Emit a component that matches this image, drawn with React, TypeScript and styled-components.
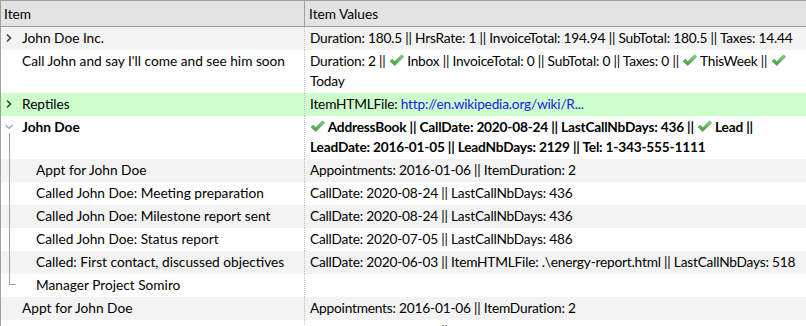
import React from "react";
import styled, { createGlobalStyle } from "styled-components";

const GlobalStyle = createGlobalStyle`
  html, body {
    margin: 0;
    padding: 0;
    background: #ffffff;
  }
  body {
    font-family: Lato, "Noto Sans", sans-serif;
    font-size: 13.7px;
    color: #000;
  }
`;

type Seg = string | { check: true } | { link: string };

type Row = {
  label: string;
  level: number;
  expander?: "closed" | "open";
  bold?: boolean;
  green?: boolean;
  guide?: "mid" | "last" | "start";
  values: Seg[];
};

const CHECK = { check: true } as const;

const rows: Row[] = [
  {
    label: "John Doe Inc.",
    level: 0,
    expander: "closed",
    values: ["Duration: 180.5 || HrsRate: 1 || InvoiceTotal: 194.94 || SubTotal: 180.5 || Taxes: 14.44"],
  },
  {
    label: "Call John and say I'll come and see him soon",
    level: 0,
    values: ["Duration: 2 || ", CHECK, " Inbox || InvoiceTotal: 0 || SubTotal: 0 || Taxes: 0 || ", CHECK, " ThisWeek || ", CHECK, " Today"],
  },
  {
    label: "Reptiles",
    level: 0,
    expander: "closed",
    green: true,
    values: ["ItemHTMLFile: ", { link: "http://en.wikipedia.org/wiki/R..." }],
  },
  {
    label: "John Doe",
    level: 0,
    expander: "open",
    bold: true,
    guide: "start",
    values: [CHECK, " AddressBook || CallDate: 2020-08-24 || LastCallNbDays: 436 || ", CHECK, " Lead || LeadDate: 2016-01-05 || LeadNbDays: 2129 || Tel: 1-343-555-1111"],
  },
  { label: "Appt for John Doe", level: 1, guide: "mid", values: ["Appointments: 2016-01-06 || ItemDuration: 2"] },
  { label: "Called John Doe: Meeting preparation", level: 1, guide: "mid", values: ["CallDate: 2020-08-24 || LastCallNbDays: 436"] },
  { label: "Called John Doe: Milestone report sent", level: 1, guide: "mid", values: ["CallDate: 2020-08-24 || LastCallNbDays: 436"] },
  { label: "Called John Doe: Status report", level: 1, guide: "mid", values: ["CallDate: 2020-07-05 || LastCallNbDays: 486"] },
  {
    label: "Called: First contact, discussed objectives",
    level: 1,
    guide: "mid",
    values: ["CallDate: 2020-06-03 || ItemHTMLFile: .\\energy-report.html || LastCallNbDays: 518"],
  },
  { label: "Manager Project Somiro", level: 1, guide: "last", values: [] },
  { label: "Appt for John Doe", level: 0, values: ["Appointments: 2016-01-06 || ItemDuration: 2"] },
  { label: "Called John Doe: Meeting preparation", level: 0, values: ["CallDate: 2020-08-24 || LastCallNbDays: 436"] },
];

function Check() {
  return (
    <CheckIcon width="15" height="13" viewBox="0 0 15 13">
      <defs>
        <linearGradient id="ck" x1="0" y1="0" x2="0" y2="1">
          <stop offset="0" stopColor="#8fd08a" />
          <stop offset="1" stopColor="#3e9a3a" />
        </linearGradient>
      </defs>
      <path
        d="M1 7.2 L3.2 5 L5.8 7.6 L12.6 0.8 L14.6 2.8 L5.8 11.6 Z"
        fill="url(#ck)"
        stroke="#4a9a46"
        strokeWidth="0.6"
        strokeLinejoin="round"
      />
    </CheckIcon>
  );
}

function Chevron({ open }: { open: boolean }) {
  return open ? (
    <ChevronSvg width="10" height="10" viewBox="0 0 10 10">
      <path d="M1.5 3 L5 6.5 L8.5 3" fill="none" stroke="#a0a0a0" strokeWidth="1.2" />
    </ChevronSvg>
  ) : (
    <ChevronSvg width="10" height="10" viewBox="0 0 10 10">
      <path d="M3 1.5 L6.5 5 L3 8.5" fill="none" stroke="#404040" strokeWidth="1.6" />
    </ChevronSvg>
  );
}

export default function App() {
  return (
    <>
      <GlobalStyle />
      <Grid>
        <Header>
          <HeadCell>Item</HeadCell>
          <HeadCell $divider>Item Values</HeadCell>
        </Header>
        {rows.map((r, i) => (
          <RowLine key={i} $bg={r.green ? "#ccffcc" : i % 2 === 0 ? "#f3f3f3" : "#ffffff"} $bold={!!r.bold}>
            <ItemCell $level={r.level}>
              {r.guide && <Guide $kind={r.guide} />}
              <Expander>{r.expander && <Chevron open={r.expander === "open"} />}</Expander>
              <span>{r.label}</span>
            </ItemCell>
            <ValueCell>
              {r.values.map((s, j) =>
                typeof s === "string" ? (
                  <React.Fragment key={j}>{s}</React.Fragment>
                ) : "check" in s ? (
                  <Check key={j} />
                ) : (
                  <Link key={j}>{s.link}</Link>
                )
              )}
            </ValueCell>
          </RowLine>
        ))}
      </Grid>
    </>
  );
}

const Grid = styled.div`
  width: 806px;
  height: 326px;
  overflow: hidden;
  border-top: 1px solid #a0a0a0;
  border-left: 1px solid #a0a0a0;
  box-sizing: border-box;
`;

const Header = styled.div`
  display: grid;
  grid-template-columns: 303px 1fr;
  height: 25px;
  background: #e3e3e3;
  border-bottom: 1px solid #a0a0a0;
`;

const HeadCell = styled.div<{ $divider?: boolean }>`
  display: flex;
  align-items: center;
  padding-left: ${(p) => (p.$divider ? "4px" : "3px")};
  border-left: ${(p) => (p.$divider ? "1px solid #a0a0a0" : "none")};
  line-height: 20px;
`;

const RowLine = styled.div<{ $bg: string; $bold: boolean }>`
  display: grid;
  grid-template-columns: 303px 1fr;
  background: ${(p) => p.$bg};
  font-weight: ${(p) => (p.$bold ? 700 : 400)};
  line-height: 20px;
`;

const ItemCell = styled.div<{ $level: number }>`
  position: relative;
  display: flex;
  align-items: flex-start;
  padding: 1px 0 2px ${(p) => 3 + p.$level * 14}px;
  white-space: nowrap;
  overflow: hidden;
`;

const Expander = styled.span`
  width: 18px;
  height: 20px;
  flex: none;
  display: flex;
  align-items: center;
`;

const ChevronSvg = styled.svg`
  display: block;
`;

const Guide = styled.span<{ $kind: "mid" | "last" | "start" }>`
  position: absolute;
  left: 8px;
  width: 6px;
  top: ${(p) => (p.$kind === "start" ? "17px" : "0")};
  height: ${(p) => (p.$kind === "last" ? "10px" : "auto")};
  bottom: ${(p) => (p.$kind === "last" ? "auto" : "0")};
  border-left: 1px solid #a0a0a0;
  border-bottom: ${(p) => (p.$kind === "last" ? "1px solid #a0a0a0" : "none")};
`;

const ValueCell = styled.div`
  border-left: 1px dotted #c0c0c0;
  padding: 1px 1px 2px 5px;
  letter-spacing: -0.2px;
`;

const CheckIcon = styled.svg`
  display: inline-block;
  vertical-align: -1px;
`;

const Link = styled.span`
  color: #1a1ae6;
`;
